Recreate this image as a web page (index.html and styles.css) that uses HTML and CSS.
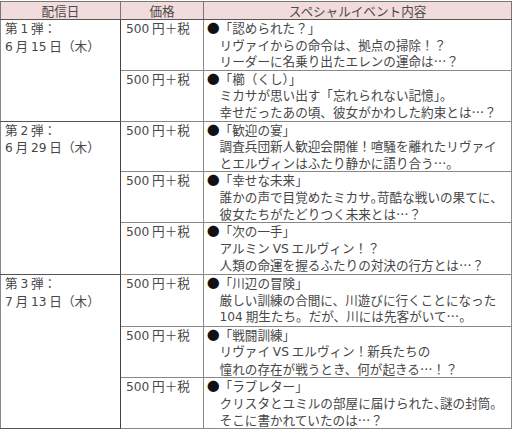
FILE: index.html
```html
<!DOCTYPE html>
<html lang="ja">
<head>
<meta charset="utf-8">
<link rel="stylesheet" href="styles.css">
</head>
<body>
<table class="sched">
  <colgroup>
    <col class="c-date">
    <col class="c-price">
    <col class="c-body">
  </colgroup>
  <thead>
    <tr>
      <th>配信日</th>
      <th>価格</th>
      <th>スペシャルイベント内容</th>
    </tr>
  </thead>
  <tbody class="grp">
    <tr>
      <td class="date" rowspan="2">第 <span class="n">1</span> 弾：<br><span class="n">6</span> 月 <span class="n">15</span> 日（木）</td>
      <td class="price"><span class="n">500</span> 円＋税</td>
      <td class="ev"><span class="b">●</span>「認められた？」<br>リヴァイからの命令は、拠点の掃除！？<br>リーダーに名乗り出たエレンの運命は…？</td>
    </tr>
    <tr>
      <td class="price"><span class="n">500</span> 円＋税</td>
      <td class="ev"><span class="b">●</span>「櫛（くし）」<br>ミカサが思い出す「忘れられない記憶」。<br>幸せだったあの頃、彼女がかわした約束とは…？</td>
    </tr>
  </tbody>
  <tbody class="grp">
    <tr>
      <td class="date" rowspan="3">第 <span class="n">2</span> 弾：<br><span class="n">6</span> 月 <span class="n">29</span> 日（木）</td>
      <td class="price"><span class="n">500</span> 円＋税</td>
      <td class="ev"><span class="b">●</span>「歓迎の宴」<br>調査兵団新人歓迎会開催！喧騒を離れたリヴァイ<br>とエルヴィンはふたり静かに語り合う…。</td>
    </tr>
    <tr>
      <td class="price"><span class="n">500</span> 円＋税</td>
      <td class="ev"><span class="b">●</span>「幸せな未来」<br>誰かの声で目覚めたミカサ<span class="h">。</span>苛酷な戦いの果てに<span class="h">、</span><br>彼女たちがたどりつく未来とは…？</td>
    </tr>
    <tr>
      <td class="price"><span class="n">500</span> 円＋税</td>
      <td class="ev"><span class="b">●</span>「次の一手」<br>アルミン <span class="n">VS</span> エルヴィン！？<br>人類の命運を握るふたりの対決の行方とは…？</td>
    </tr>
  </tbody>
  <tbody class="grp">
    <tr>
      <td class="date" rowspan="3">第 <span class="n">3</span> 弾：<br><span class="n">7</span> 月 <span class="n">13</span> 日（木）</td>
      <td class="price"><span class="n">500</span> 円＋税</td>
      <td class="ev"><span class="b">●</span>「川辺の冒険」<br>厳しい訓練の合間に、川遊びに行くことになった<br><span class="n">104</span> 期生たち。だが、川には先客がいて…。</td>
    </tr>
    <tr>
      <td class="price"><span class="n">500</span> 円＋税</td>
      <td class="ev"><span class="b">●</span>「戦闘訓練」<br>リヴァイ <span class="n">VS</span> エルヴィン！新兵たちの<br>憧れの存在が戦うとき、何が起きる…！？</td>
    </tr>
    <tr>
      <td class="price"><span class="n">500</span> 円＋税</td>
      <td class="ev"><span class="b">●</span>「ラブレター」<br>クリスタとユミルの部屋に届けられた<span class="h">、</span>謎の封筒<span class="h">。</span><br>そこに書かれていたのは…？</td>
    </tr>
  </tbody>
</table>
</body>
</html>
```

FILE: styles.css
```css
html, body {
  margin: 0;
  padding: 0;
  background: #ffffff;
}

body {
  padding-top: 1px;
  font-family: "Noto Sans CJK JP", "Noto Sans", sans-serif;
  font-size: 12.6px;
  color: #474747;
}

.sched {
  border-collapse: collapse;
  width: 511px;
  table-layout: fixed;
  border: 1px solid #555;
}

.c-date { width: 120px; }
.c-price { width: 83px; }
.c-body { width: 308px; }

.sched th {
  background: #f2dcdb;
  font-weight: normal;
  color: #4a4a4a;
  height: 17px;
  line-height: 17px;
  padding: 0;
  text-align: center;
  border: 1px solid #777;
  border-bottom-color: #555;
}

.sched td {
  vertical-align: top;
  padding: 0;
  line-height: 16.6px;
  border: 1px solid #888;
  white-space: nowrap;
}

.grp {
  border-top: 1px solid #555;
}

.sched td.date {
  padding-left: 4px;
  border-right-color: #444;
  border-bottom-color: #555;
}

.sched td.price {
  padding-left: 5px;
}

.sched td.ev {
  padding-left: calc(1em + 3px);
  text-indent: -1em;
}

.n {
  font-family: "DejaVu Sans", sans-serif;
  font-size: 12.2px;
}

.b {
  color: #111;
}

.h {
  font-feature-settings: "halt";
}
```
